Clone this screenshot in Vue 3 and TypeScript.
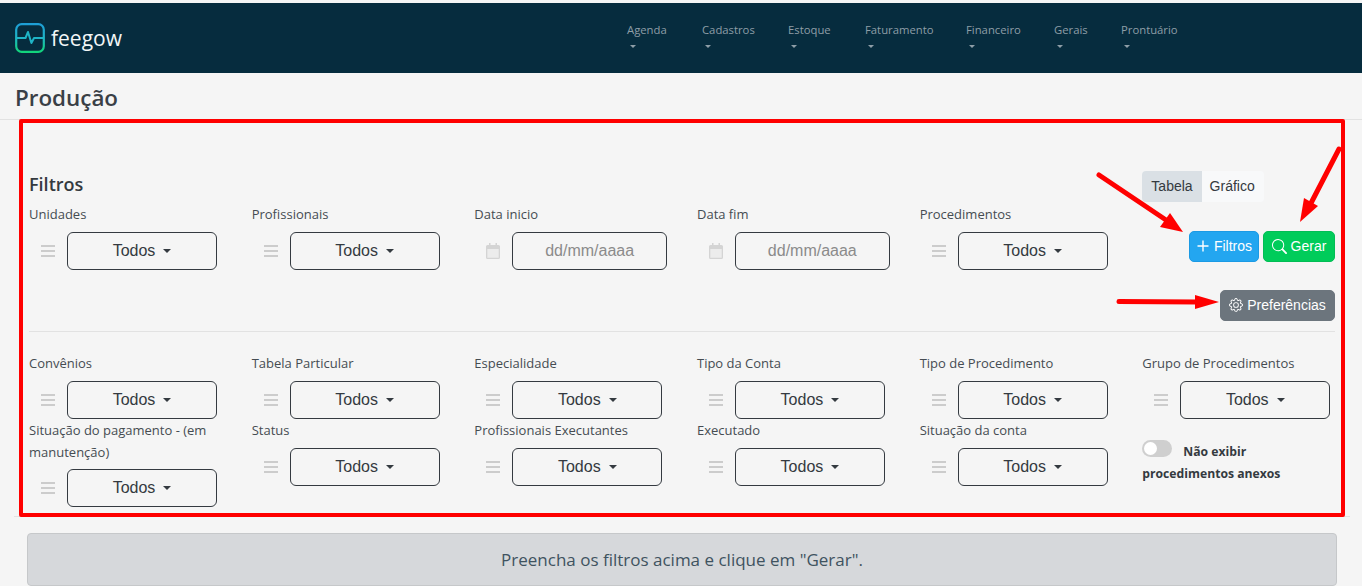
<script setup lang="ts">
const menu = ['Agenda', 'Cadastros', 'Estoque', 'Faturamento', 'Financeiro', 'Gerais', 'Prontuário']

const firstRow = [
  { label: 'Unidades', kind: 'select' },
  { label: 'Profissionais', kind: 'select' },
  { label: 'Data inicio', kind: 'date' },
  { label: 'Data fim', kind: 'date' },
  { label: 'Procedimentos', kind: 'select' },
]

const otherRows = [
  'Convênios',
  'Tabela Particular',
  'Especialidade',
  'Tipo da Conta',
  'Tipo de Procedimento',
  'Grupo de Procedimentos',
  'Situação do pagamento - (em manutenção)',
  'Status',
  'Profissionais Executantes',
  'Executado',
  'Situação da conta',
]
</script>

<template>
  <div class="page">
    <header class="navbar">
      <div class="brand">
        <svg class="brand-icon" width="30" height="30" viewBox="0 0 30 30" fill="none">
          <defs>
            <linearGradient id="logoGrad" x1="0" y1="0" x2="0" y2="1">
              <stop offset="0" stop-color="#1e9fd6" />
              <stop offset="0.5" stop-color="#1eb5c4" />
              <stop offset="1" stop-color="#12d67c" />
            </linearGradient>
          </defs>
          <rect x="1.2" y="1.2" width="27.6" height="27.6" rx="5.5" stroke="url(#logoGrad)" stroke-width="2.2" />
          <path d="M1.2 15H10.500l2.500-6 3.400 11 2.600-5h9.800" stroke="#1fb4c6" stroke-width="2" stroke-linejoin="round" />
        </svg>
        <span class="brand-name">feegow</span>
      </div>
      <nav class="menu">
        <a v-for="item in menu" :key="item" class="menu-item">
          <span>{{ item }}</span>
          <i class="menu-caret"></i>
        </a>
      </nav>
    </header>

    <div class="title-bar">
      <h1>Produção</h1>
    </div>

    <section class="card">
      <div class="filters">
        <div class="top-row">
          <div class="top-fields">
            <h2>Filtros</h2>
            <div class="grid five">
              <div v-for="f in firstRow" :key="f.label" class="field">
                <label>{{ f.label }}</label>
                <div class="control">
                  <svg v-if="f.kind === 'date'" class="side-icon" width="14" height="16" viewBox="0 0 14 16">
                    <path fill="#ececec" d="M1 5h12v10H1z" />
                    <path fill="#d4d4d4" d="M3 0h1.500v2h5V0H11v2h1.500A1.500 1.500 0 0 1 14 3.500v11a1.500 1.500 0 0 1-1.500 1.500h-11A1.500 1.500 0 0 1 0 14.500v-11A1.500 1.500 0 0 1 1.500 2H3zM1.300 6v8.700h11.400V6z" />
                  </svg>
                  <svg v-else class="side-icon" width="14" height="12" viewBox="0 0 14 12">
                    <path fill="#cccccc" d="M0 0h14v2H0zM0 5h14v2H0zM0 10h14v2H0z" />
                  </svg>
                  <div v-if="f.kind === 'date'" class="date-box">dd/mm/aaaa</div>
                  <button v-else class="select-box">Todos<i class="caret"></i></button>
                </div>
              </div>
            </div>
          </div>

          <div class="actions">
            <div class="toggle-group">
              <span class="active">Tabela</span>
              <span class="second">Gráfico</span>
            </div>
            <div class="action-buttons">
              <button class="btn blue">
                <svg width="14" height="14" viewBox="0 0 14 14"><path fill="none" stroke="#fff" stroke-width="1.400" d="M7 1.500v11M1.500 7h11" /></svg>
                Filtros
              </button>
              <button class="btn green">
                <svg width="15" height="15" viewBox="0 0 16 16" fill="#fff">
                  <path d="M11.742 10.344a6.500 6.500 0 1 0-1.397 1.398h-.001c.03.04.062.078.098.115l3.850 3.850a1 1 0 0 0 1.415-1.414l-3.850-3.850a1.007 1.007 0 0 0-.115-.1zM12 6.500a5.500 5.500 0 1 1-11 0 5.500 5.500 0 0 1 11 0z" />
                </svg>
                Gerar
              </button>
            </div>
            <button class="btn gray">
              <svg width="14" height="14" viewBox="0 0 16 16" fill="#fff">
                <path d="M8 4.754a3.246 3.246 0 1 0 0 6.492 3.246 3.246 0 0 0 0-6.492zM5.754 8a2.246 2.246 0 1 1 4.492 0 2.246 2.246 0 0 1-4.492 0z" />
                <path d="M9.796 1.343c-.527-1.790-3.065-1.790-3.592 0l-.094.319a.873.873 0 0 1-1.255.52l-.292-.16c-1.640-.892-3.433.902-2.540 2.541l.159.292a.873.873 0 0 1-.52 1.255l-.319.094c-1.790.527-1.790 3.065 0 3.592l.319.094a.873.873 0 0 1 .52 1.255l-.16.292c-.892 1.640.901 3.434 2.541 2.540l.292-.159a.873.873 0 0 1 1.255.52l.094.319c.527 1.790 3.065 1.790 3.592 0l.094-.319a.873.873 0 0 1 1.255-.52l.292.16c1.640.893 3.434-.902 2.540-2.541l-.159-.292a.873.873 0 0 1 .52-1.255l.319-.094c1.790-.527 1.790-3.065 0-3.592l-.319-.094a.873.873 0 0 1-.52-1.255l.16-.292c.893-1.640-.902-3.433-2.541-2.540l-.292.159a.873.873 0 0 1-1.255-.52l-.094-.319zm-2.633.283c.246-.835 1.428-.835 1.674 0l.094.319a1.873 1.873 0 0 0 2.693 1.115l.291-.16c.764-.415 1.600.42 1.184 1.185l-.159.292a1.873 1.873 0 0 0 1.116 2.692l.318.094c.835.246.835 1.428 0 1.674l-.319.094a1.873 1.873 0 0 0-1.115 2.693l.16.291c.415.764-.42 1.600-1.185 1.184l-.291-.159a1.873 1.873 0 0 0-2.693 1.116l-.094.318c-.246.835-1.428.835-1.674 0l-.094-.319a1.873 1.873 0 0 0-2.692-1.115l-.292.16c-.764.415-1.600-.42-1.184-1.185l.159-.291A1.873 1.873 0 0 0 1.945 8.930l-.319-.094c-.835-.246-.835-1.428 0-1.674l.319-.094A1.873 1.873 0 0 0 3.060 4.377l-.16-.292c-.415-.764.42-1.600 1.185-1.184l.292.159a1.873 1.873 0 0 0 2.692-1.115l.094-.319z" />
              </svg>
              Preferências
            </button>
          </div>
        </div>

        <hr />

        <div class="grid six">
          <div v-for="label in otherRows" :key="label" class="field">
            <label>{{ label }}</label>
            <div class="control">
              <svg class="side-icon" width="14" height="12" viewBox="0 0 14 12"><path fill="#cccccc" d="M0 0h14v2H0zM0 5h14v2H0zM0 10h14v2H0z" /></svg>
              <button class="select-box">Todos<i class="caret"></i></button>
            </div>
          </div>
          <div class="switch-field">
            <span class="switch"><i></i></span>
            <b>Não exibir procedimentos anexos</b>
          </div>
        </div>
      </div>
    </section>

    <div class="notice">Preencha os filtros acima e clique em "Gerar".</div>

    <!-- marcações vermelhas por cima da tela -->
    <div class="red-frame"></div>
    <svg class="arrows" width="1362" height="586" viewBox="0 0 1362 586" fill="#ff0000">
      <path d="M1099 175l67 45" stroke="#ff0000" stroke-width="5" stroke-linecap="round" />
      <path d="M1183 232l-23-5 10-14z" />
      <path d="M1339 149l-30 58" stroke="#ff0000" stroke-width="5" stroke-linecap="round" />
      <path d="M1300 222l4-24 14 8z" />
      <path d="M1119 301.500l78 .5" stroke="#ff0000" stroke-width="5" stroke-linecap="round" />
      <path d="M1219 302l-24-7v14z" />
    </svg>
  </div>
</template>

<style scoped>
.page {
  position: relative;
  height: 586px;
  overflow: hidden;
  padding-top: 3px;
  box-sizing: border-box;
  background: #f5f5f5;
  color: #343a40;
  font-family: "Open Sans", "Noto Sans", sans-serif;
}
.navbar {
  height: 70px;
  background: #062c3e;
  display: flex;
  align-items: flex-start;
}
.brand {
  display: flex;
  align-items: center;
  gap: 6px;
  margin: 20px 0 0 15px;
  width: 612px;
}
.brand-name {
  font-family: "Open Sans", sans-serif;
  font-weight: 400;
  font-size: 21px;
  line-height: 30px;
  color: #f2f6f7;
}
.menu {
  display: grid;
  grid-template-columns: 75px 86px 77px 101px 88px 67px auto;
  padding-top: 19px;
}
.menu-item {
  display: block;
  font-size: 11.3px;
  line-height: 16px;
  color: #8e9ea7;
}
.menu-item span {
  display: block;
}
.menu-caret {
  display: block;
  width: 0;
  margin: 7px 0 0 3px;
  border-top: 3px solid #8e9ea7;
  border-left: 3px solid transparent;
  border-right: 3px solid transparent;
}
.title-bar {
  height: 47px;
  border-bottom: 1px solid #e2e2e2;
  padding-left: 15px;
  box-sizing: border-box;
}
.title-bar h1 {
  margin: 0;
  padding-top: 10px;
  font-size: 22.4px;
  line-height: 30px;
  font-weight: 600;
  color: #3a4046;
}
.card {
  margin: 0 12px 0 14px;
  height: 397px;
  box-sizing: border-box;
  border-bottom: 1px solid #e2e2e2;
}
.filters {
  padding: 51px 15px 0;
}
.top-row {
  display: flex;
  justify-content: space-between;
}
h2 {
  margin: 1px 0 0;
  font-size: 18px;
  line-height: 25px;
  font-weight: 600;
  color: #343a40;
}
.grid {
  display: grid;
  column-gap: 30px;
}
.grid.five {
  grid-template-columns: repeat(5, 192.67px);
  margin-top: 6px;
}
.grid.six {
  grid-template-columns: repeat(6, 192.67px);
  align-items: start;
}
.field label {
  display: block;
  font-size: 13px;
  line-height: 22px;
  margin-bottom: 7px;
  color: #454c52;
}
.grid.six .field:nth-child(7) label {
  margin-bottom: 6px;
}
.control {
  display: flex;
  align-items: center;
  padding-left: 12px;
  gap: 12px;
}
.side-icon {
  flex: none;
}
.select-box,
.date-box {
  height: 38px;
  box-sizing: border-box;
  border: 1px solid #343a40;
  border-radius: 6px;
  background: transparent;
  font-family: "Liberation Sans", sans-serif;
  font-size: 16px;
  display: flex;
  align-items: center;
  justify-content: center;
  padding: 0;
}
.select-box {
  width: 150px;
  color: #343a40;
}
.date-box {
  width: 155px;
  color: #8b8b8b;
}
.caret {
  display: inline-block;
  margin-left: 8px;
  border-top: 4px solid #343a40;
  border-left: 4px solid transparent;
  border-right: 4px solid transparent;
}
.actions {
  width: 192.67px;
  display: flex;
  flex-direction: column;
  align-items: flex-end;
}
.toggle-group {
  align-self: flex-start;
  display: flex;
  height: 31px;
  border-radius: 4px;
  overflow: hidden;
  font-family: "Liberation Sans", sans-serif;
  font-size: 14px;
  line-height: 31px;
  color: #343a40;
  background: #f8f9fa;
}
.toggle-group span {
  padding: 0 9px;
}
.toggle-group .active {
  background: #dae0e5;
}
.toggle-group .second {
  padding: 0 9px 0 8px;
}
.action-buttons {
  margin-top: 29px;
  display: flex;
  gap: 4px;
}
.btn {
  display: flex;
  align-items: center;
  justify-content: center;
  gap: 4px;
  height: 31px;
  padding: 0 0 1px;
  border-radius: 5px;
  color: #fff;
  font-family: "Liberation Sans", sans-serif;
  font-size: 14px;
  border: 1px solid transparent;
}
.blue {
  width: 70px;
  background: #23a6f0;
  border-color: #1b9ae4;
}
.green {
  width: 72px;
  background: #00cc5a;
  border-color: #02bd55;
}
.gray {
  margin-top: 28px;
  width: 115px;
  background: #6c757d;
  border-color: #6c757d;
}
hr {
  margin: 10px 0 20px;
  border: 0;
  border-top: 1px solid #e2e2e2;
}
.switch-field {
  margin-top: 21px;
  font-size: 12.2px;
  line-height: 22px;
  color: #343a40;
}
.switch-field b {
  font-weight: 700;
}
.switch {
  display: inline-block;
  vertical-align: -1px;
  width: 30px;
  height: 17px;
  border-radius: 9px;
  background: #cfcfcf;
  margin-right: 11px;
  position: relative;
}
.switch i {
  position: absolute;
  left: 2px;
  top: 2px;
  width: 13px;
  height: 13px;
  border-radius: 50%;
  background: #fff;
}
.notice {
  margin: 16px 25px 0 27px;
  height: 53px;
  box-sizing: border-box;
  padding-top: 14px;
  border: 1px solid #c6c8ca;
  border-radius: 4px;
  background: #d6d8db;
  color: #3f5360;
  font-size: 17px;
  line-height: 24px;
  text-align: center;
}
.red-frame {
  position: absolute;
  left: 19px;
  top: 119px;
  width: 1326px;
  height: 398px;
  box-sizing: border-box;
  border: 4px solid #ff0000;
  border-radius: 2px;
  pointer-events: none;
}
.arrows {
  position: absolute;
  left: 0;
  top: 0;
  pointer-events: none;
}
</style>

<style>
html, body {
  background: #f5f5f5;
}
</style>
